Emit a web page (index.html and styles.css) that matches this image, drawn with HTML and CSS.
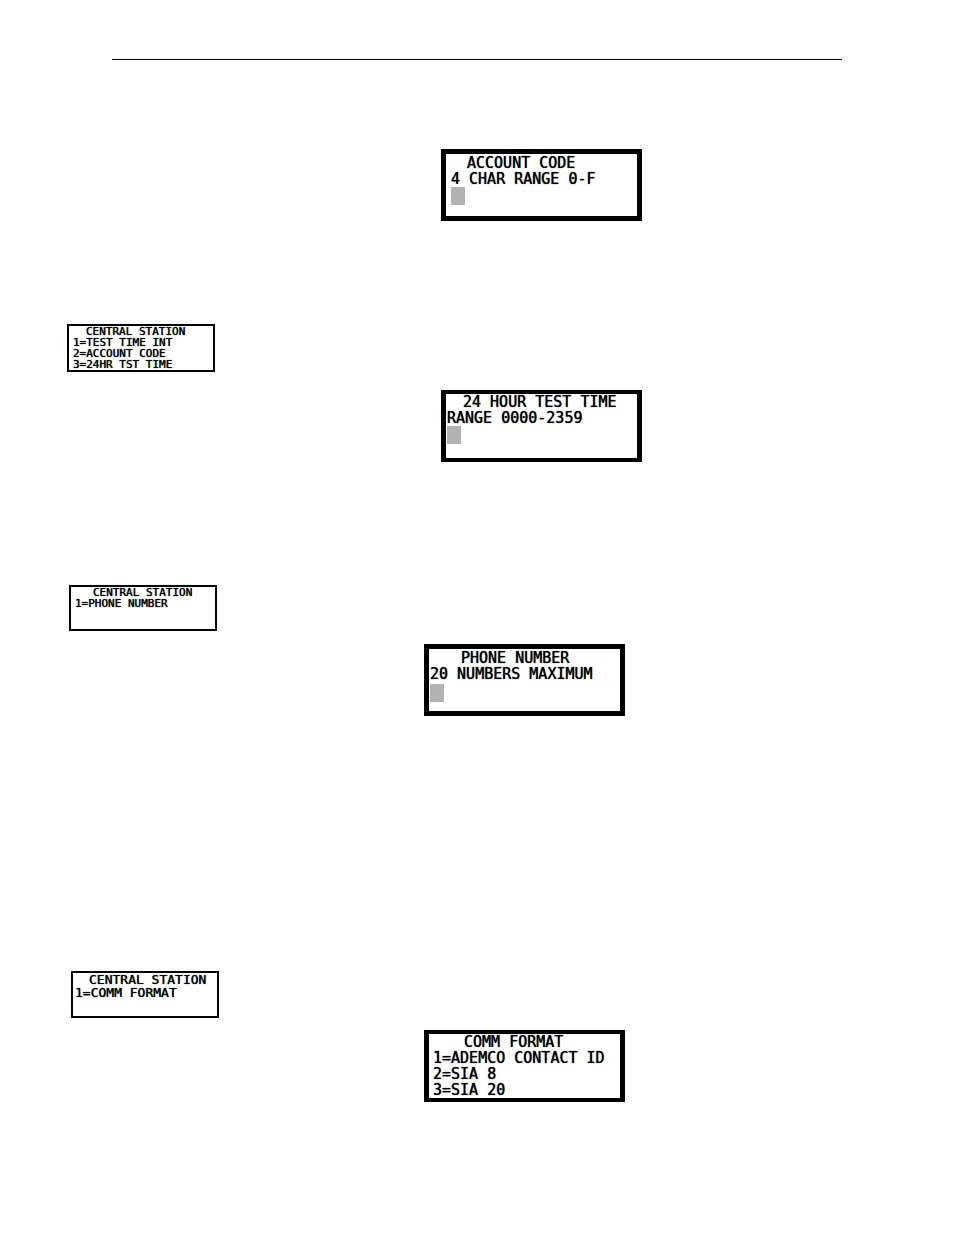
FILE: index.html
```html
<!DOCTYPE html>
<html lang="en">
<head>
    <meta charset="utf-8">
    <title>Central Station Programming</title>
    <link rel="stylesheet" href="styles.css">
</head>
<body>
    <hr class="page-rule">

    <main class="page">
        <section class="group">
            <div class="screen account">
                <div class="line title">ACCOUNT CODE</div>
                <div class="line">4 CHAR RANGE 0-F</div>
                <span class="cursor"></span>
            </div>
        </section>

        <section class="group station">
            <div class="menu">
                <div class="line title">CENTRAL STATION</div>
                <div class="line">1=TEST TIME INT</div>
                <div class="line">2=ACCOUNT CODE</div>
                <div class="line">3=24HR TST TIME</div>
            </div>
            <div class="screen test-time">
                <div class="line title">24 HOUR TEST TIME</div>
                <div class="line">RANGE 0000-2359</div>
                <span class="cursor"></span>
            </div>
        </section>

        <section class="group phone">
            <div class="menu">
                <div class="line title">CENTRAL STATION</div>
                <div class="line">1=PHONE NUMBER</div>
            </div>
            <div class="screen">
                <div class="line title">PHONE NUMBER</div>
                <div class="line">20 NUMBERS MAXIMUM</div>
                <span class="cursor"></span>
            </div>
        </section>

        <section class="group format">
            <div class="menu">
                <div class="line title">CENTRAL STATION</div>
                <div class="line">1=COMM FORMAT</div>
            </div>
            <div class="screen">
                <div class="line title">COMM FORMAT</div>
                <div class="line">1=ADEMCO CONTACT ID</div>
                <div class="line">2=SIA 8</div>
                <div class="line">3=SIA 20</div>
            </div>
        </section>
    </main>
</body>
</html>
```
FILE: styles.css
```css
* {
    box-sizing: border-box;
}

body {
    margin: 0;
    background: #fff;
    color: #000;
    font-family: "DejaVu Sans Mono", monospace;
    text-shadow: 0 0 1px #000;
}

.page-rule {
    margin: 59px 112px 0;
    border: 0;
    border-top: 1px solid #000;
}

.page {
    padding: 89px 0 132px;
}

.group {
    display: flex;
    flex-direction: column;
    align-items: flex-start;
}

.line {
    white-space: pre;
}

/* keypad display */
.screen {
    width: 201px;
    min-height: 72px;
    margin-left: 424px;
    padding: 1px 0 0 1px;
    border: 5px solid #000;
    font-size: 15px;
    line-height: 16px;
}

.screen .title {
    padding-left: 31px;
}

.cursor {
    display: block;
    width: 14px;
    height: 18px;
    background: #b3b3b3;
}

/* small menu display */
.menu {
    width: 148px;
    min-height: 46px;
    margin-left: 69px;
    padding-left: 4px;
    border: 2px solid #000;
    font-size: 11px;
    line-height: 11px;
}

.menu .title {
    padding-left: 18px;
}

.account,
.test-time {
    margin-left: 441px;
}

.account {
    padding-left: 5px;
}

.account .title,
.test-time .title {
    padding-left: 16px;
}

.test-time,
.format .screen {
    padding-top: 0;
    border-top-width: 4px;
    border-bottom-width: 4px;
}

.station {
    gap: 18px;
    margin-top: 103px;
}

.station .menu {
    margin-left: 67px;
}

.station .menu .title {
    padding-left: 13px;
}

.phone {
    gap: 13px;
    margin-top: 123px;
}

.phone .cursor {
    margin-top: 2px;
}

.format {
    gap: 12px;
    margin-top: 255px;
}

.format .menu {
    min-height: 47px;
    margin-left: 71px;
    padding-left: 2px;
    font-size: 13px;
    line-height: 13px;
}

.format .menu .title {
    padding-left: 14px;
}

.format .screen {
    padding-left: 4px;
}
```
